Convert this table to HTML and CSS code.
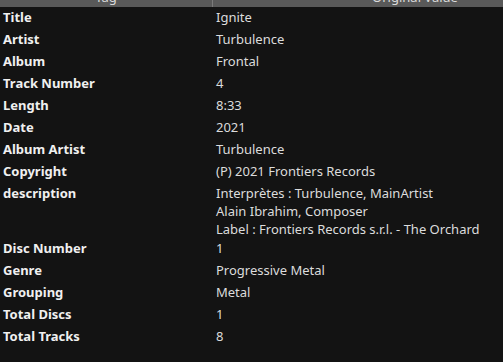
FILE: index.html
```html
<!DOCTYPE html>
<html lang="en">

<head>
    <meta charset="UTF-8">
    <title>Tags</title>
    <link rel="stylesheet" href="styles.css">
</head>

<body>
    <div class="tag-view">
        <div class="tag-header">
            <div class="head-cell head-tag">Tag</div>
            <div class="head-cell head-value">Original Value</div>
        </div>

        <div class="tag-row"><div class="tag-name">Title</div><div class="tag-value">Ignite</div></div>
        <div class="tag-row"><div class="tag-name">Artist</div><div class="tag-value">Turbulence</div></div>
        <div class="tag-row"><div class="tag-name">Album</div><div class="tag-value">Frontal</div></div>
        <div class="tag-row"><div class="tag-name">Track Number</div><div class="tag-value">4</div></div>
        <div class="tag-row"><div class="tag-name">Length</div><div class="tag-value">8:33</div></div>
        <div class="tag-row"><div class="tag-name">Date</div><div class="tag-value">2021</div></div>
        <div class="tag-row"><div class="tag-name">Album Artist</div><div class="tag-value">Turbulence</div></div>
        <div class="tag-row"><div class="tag-name">Copyright</div><div class="tag-value">(P) 2021 Frontiers Records</div></div>
        <div class="tag-row multi">
            <div class="tag-name">description</div>
            <div class="tag-value">Interprètes : Turbulence, MainArtist<br>Alain Ibrahim, Composer<br>Label : Frontiers Records s.r.l. - The Orchard</div>
        </div>
        <div class="tag-row"><div class="tag-name">Disc Number</div><div class="tag-value">1</div></div>
        <div class="tag-row"><div class="tag-name">Genre</div><div class="tag-value">Progressive Metal</div></div>
        <div class="tag-row"><div class="tag-name">Grouping</div><div class="tag-value">Metal</div></div>
        <div class="tag-row"><div class="tag-name">Total Discs</div><div class="tag-value">1</div></div>
        <div class="tag-row"><div class="tag-name">Total Tracks</div><div class="tag-value">8</div></div>
    </div>
</body>

</html>
```

FILE: styles.css
```css
body {
    margin: 0;
    background-color: #131313;
    font-family: 'Noto Sans', sans-serif;
    font-size: 13px;
    color: #dcdcdc;
    overflow: hidden;
}

.tag-view {
    width: 503px;
    height: 362px;
    overflow: hidden;
}

/* header is scrolled so only its lower edge shows */
.tag-header {
    display: flex;
    height: 24px;
    margin-top: -17px;
    background-color: #595959;
    color: #dadada;
    line-height: 28px;
    overflow: hidden;
}

.head-cell {
    text-align: center;
    flex-shrink: 0;
}

.head-tag {
    width: 212px;
    border-right: 1px solid #7a7a7a;
}

.head-value {
    width: 404px;
}

.tag-row {
    display: flex;
    padding: 1px 0 3px;
    line-height: 18px;
}

.tag-row.multi {
    padding-bottom: 0;
}

.tag-name {
    width: 213px;
    padding-left: 3px;
    box-sizing: border-box;
    font-weight: bold;
    color: #f0f0f0;
    flex-shrink: 0;
}

.tag-value {
    padding-left: 3px;
}
```
